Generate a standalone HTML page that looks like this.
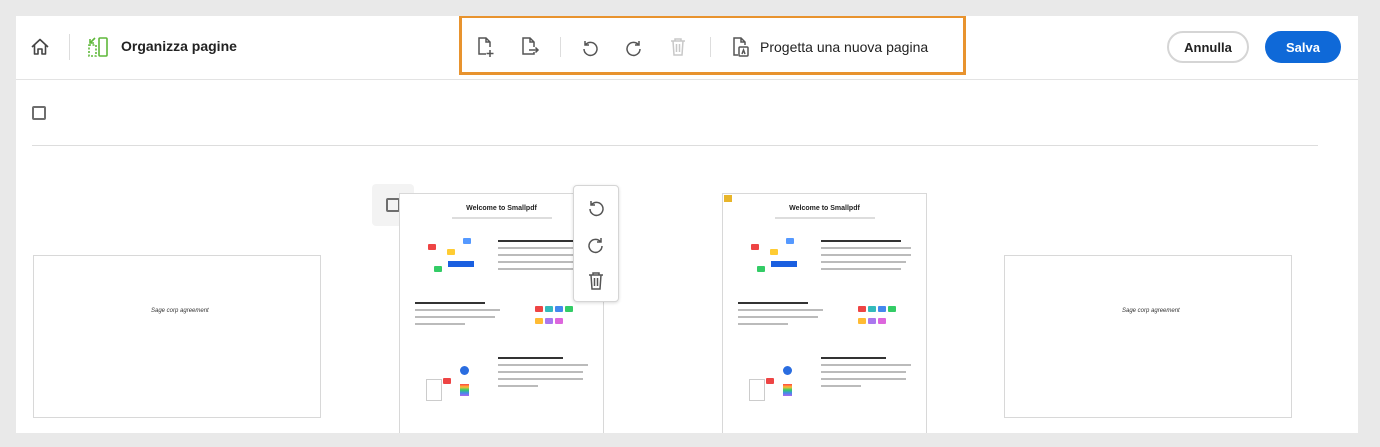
<!DOCTYPE html>
<html><head><meta charset="utf-8"><style>
*{box-sizing:border-box;margin:0;padding:0}
body{width:1380px;height:447px;background:#e9e9e9;font-family:"Liberation Sans",sans-serif;position:relative;overflow:hidden}
.panel{position:absolute;left:16px;top:16px;width:1342px;height:417px;background:#fff;overflow:hidden}
.hdr{position:absolute;left:0;top:0;width:1342px;height:64px;border-bottom:1px solid #e3e3e3}
.abs{position:absolute}
.title{left:105px;top:22px;font-size:14px;font-weight:bold;color:#222}
.tb{position:absolute;left:443px;top:-1px;width:507px;height:60px;border:3px solid #e8932e;background:#fff}
.btn{position:absolute;top:15px;height:32px;border-radius:16px;font-size:13px;font-weight:bold;display:flex;align-items:center;justify-content:center}
.cb{position:absolute;width:14px;height:14px;border:2px solid #6e6e6e;border-radius:2px}
.page{position:absolute;background:#fff;border:1px solid #d8d8d8;overflow:hidden}
.t{position:absolute;height:2px;background:#bbb}
.tb2{position:absolute;height:3px;background:#333}
.sq{position:absolute;width:8px;height:6px;border-radius:1px}
.wt{position:absolute;left:0;width:100%;text-align:center;top:11px;font-size:7px;font-weight:bold;color:#222}
</style></head><body>
<div class="panel">
 <div class="hdr">
  <svg class="abs" style="left:14px;top:21px" width="20" height="20" viewBox="0 0 20 20" fill="none" stroke="#444" stroke-width="1.6" stroke-linejoin="round"><path d="M2 10 L10 2.5 L18 10 M4.5 8 V17 H8 V12 H12 V17 H15.5 V8"/></svg>
  <div class="abs" style="left:53px;top:18px;width:1px;height:26px;background:#ddd"></div>
  <svg class="abs" style="left:70px;top:19px" width="24" height="24" viewBox="0 0 24 24" fill="none" stroke="#5fb83a" stroke-width="1.6"><rect x="13" y="3" width="8" height="18" rx="1"/><path d="M3 10 H10 V21 H3 Z" stroke-dasharray="2 1.5"/><path d="M9 3 L4 8 M4 4 V8 H8"/></svg>
  <div class="abs title">Organizza pagine</div>
  <div class="tb">
   <svg class="abs" style="left:13px;top:17px" width="22" height="24" viewBox="0 0 22 24" fill="none" stroke="#555" stroke-width="1.5"><path d="M11 19 H4 V3 H11 L15 7 V12 M11 3 V7 H15 M15 15 V22 M11.5 18.5 H18.5"/></svg>
   <svg class="abs" style="left:57px;top:17px" width="22" height="24" viewBox="0 0 22 24" fill="none" stroke="#555" stroke-width="1.5"><path d="M15 12 V7 L11 3 H4 V19 H15 V17 M11 3 V7 H15 M10 15 H19 M16.5 12.5 L19 15 L16.5 17.5"/></svg>
   <div class="abs" style="left:98px;top:19px;width:1px;height:20px;background:#ddd"></div>
   <svg class="abs" style="left:118px;top:19px" width="20" height="20" viewBox="0 0 20 20" fill="none" stroke="#555" stroke-width="1.5"><path d="M5 4 V8 H9 M5.3 8 A6.5 6.5 0 1 1 4 12"/></svg>
   <svg class="abs" style="left:162px;top:19px" width="20" height="20" viewBox="0 0 20 20" fill="none" stroke="#555" stroke-width="1.5"><path d="M15 4 V8 H11 M14.7 8 A6.5 6.5 0 1 0 16 12"/></svg>
   <svg class="abs" style="left:206px;top:18px" width="20" height="22" viewBox="0 0 20 22" fill="none" stroke="#c8c8c8" stroke-width="1.5"><path d="M3 5 H17 M7 5 V3 H13 V5 M5 5 L6 19 H14 L15 5 M8.5 8 V16 M11.5 8 V16"/></svg>
   <div class="abs" style="left:248px;top:19px;width:1px;height:20px;background:#ddd"></div>
   <svg class="abs" style="left:268px;top:17px" width="22" height="24" viewBox="0 0 22 24" fill="none" stroke="#555" stroke-width="1.5"><path d="M8 20 H4 V3 H11 L15 7 V10 M11 3 V7 H15"/><rect x="9" y="12" width="9" height="9" rx="1"/><path d="M12 19 L13.5 15 L15 19"/></svg>
   <div class="abs" style="left:298px;top:21px;font-size:14px;color:#222">Progetta una nuova pagina</div>
  </div>
  <div class="btn" style="left:1151px;width:82px;border:2px solid #d5d5d5;color:#222">Annulla</div>
  <div class="btn" style="left:1249px;width:76px;background:#0f69d8;color:#fff">Salva</div>
 </div>
 <div class="cb" style="left:16px;top:90px"></div>
 <div class="abs" style="left:16px;top:129px;width:1286px;height:1px;background:#ddd"></div>

 <div class="page" style="left:17px;top:239px;width:288px;height:163px"><div class="abs" style="left:117px;top:52px;font-size:6px;font-style:italic;color:#333">Sage corp agreement</div></div>
 <div class="page" style="left:988px;top:239px;width:288px;height:163px"><div class="abs" style="left:117px;top:52px;font-size:6px;font-style:italic;color:#333">Sage corp agreement</div></div>

 <div class="abs" style="left:356px;top:168px;width:42px;height:42px;background:#f3f3f3;border-radius:4px"></div>
 <div class="cb" style="left:370px;top:182px"></div>

 <!-- page 2 -->
 <div class="page" style="left:383px;top:177px;width:205px;height:260px">
  <div class="wt">Welcome to Smallpdf</div>
  <div class="t" style="left:52px;top:23px;width:100px;background:#ddd"></div>
  <div class="sq" style="left:28px;top:50px;background:#e44"></div><div class="sq" style="left:47px;top:55px;background:#fc3"></div><div class="sq" style="left:63px;top:44px;background:#59f"></div><div class="sq" style="left:34px;top:72px;background:#3c6"></div>
  <div class="abs" style="left:48px;top:67px;width:26px;height:6px;background:#1a5fe0"></div>
  <div class="tb2" style="left:98px;top:46px;width:80px;height:2px"></div>
  <div class="t" style="left:98px;top:53px;width:90px"></div><div class="t" style="left:98px;top:60px;width:90px"></div><div class="t" style="left:98px;top:67px;width:85px"></div><div class="t" style="left:98px;top:74px;width:80px"></div>
  <div class="tb2" style="left:15px;top:108px;width:70px;height:2px"></div>
  <div class="t" style="left:15px;top:115px;width:85px"></div><div class="t" style="left:15px;top:122px;width:80px"></div><div class="t" style="left:15px;top:129px;width:50px"></div>
  <div class="sq" style="left:135px;top:112px;background:#e44"></div><div class="sq" style="left:145px;top:112px;background:#3bb"></div><div class="sq" style="left:155px;top:112px;background:#48e"></div><div class="sq" style="left:165px;top:112px;background:#3c6"></div>
  <div class="sq" style="left:135px;top:124px;background:#fb3"></div><div class="sq" style="left:145px;top:124px;background:#a7e"></div><div class="sq" style="left:155px;top:124px;background:#d6d"></div>
  <div class="tb2" style="left:98px;top:163px;width:65px;height:2px"></div>
  <div class="t" style="left:98px;top:170px;width:90px"></div><div class="t" style="left:98px;top:177px;width:85px"></div><div class="t" style="left:98px;top:184px;width:85px"></div><div class="t" style="left:98px;top:191px;width:40px"></div>
  <div class="abs" style="left:26px;top:185px;width:16px;height:22px;border:1px solid #ccc"></div>
  <div class="sq" style="left:43px;top:184px;background:#e44"></div>
  <div class="abs" style="left:60px;top:172px;width:9px;height:9px;border-radius:50%;background:#2a6de0"></div>
  <div class="abs" style="left:60px;top:190px;width:9px;height:12px;background:linear-gradient(#f44,#fb3,#3c6,#48e,#a6e)"></div>
  <div class="tb2" style="left:15px;top:244px;width:50px;height:2px"></div>
 </div>
 <!-- page 3 -->
 <div class="page" style="left:706px;top:177px;width:205px;height:260px">
  <div class="abs" style="left:1px;top:1px;width:8px;height:7px;background:#e8b52a"></div>
  <div class="wt">Welcome to Smallpdf</div>
  <div class="t" style="left:52px;top:23px;width:100px;background:#ddd"></div>
  <div class="sq" style="left:28px;top:50px;background:#e44"></div><div class="sq" style="left:47px;top:55px;background:#fc3"></div><div class="sq" style="left:63px;top:44px;background:#59f"></div><div class="sq" style="left:34px;top:72px;background:#3c6"></div>
  <div class="abs" style="left:48px;top:67px;width:26px;height:6px;background:#1a5fe0"></div>
  <div class="tb2" style="left:98px;top:46px;width:80px;height:2px"></div>
  <div class="t" style="left:98px;top:53px;width:90px"></div><div class="t" style="left:98px;top:60px;width:90px"></div><div class="t" style="left:98px;top:67px;width:85px"></div><div class="t" style="left:98px;top:74px;width:80px"></div>
  <div class="tb2" style="left:15px;top:108px;width:70px;height:2px"></div>
  <div class="t" style="left:15px;top:115px;width:85px"></div><div class="t" style="left:15px;top:122px;width:80px"></div><div class="t" style="left:15px;top:129px;width:50px"></div>
  <div class="sq" style="left:135px;top:112px;background:#e44"></div><div class="sq" style="left:145px;top:112px;background:#3bb"></div><div class="sq" style="left:155px;top:112px;background:#48e"></div><div class="sq" style="left:165px;top:112px;background:#3c6"></div>
  <div class="sq" style="left:135px;top:124px;background:#fb3"></div><div class="sq" style="left:145px;top:124px;background:#a7e"></div><div class="sq" style="left:155px;top:124px;background:#d6d"></div>
  <div class="tb2" style="left:98px;top:163px;width:65px;height:2px"></div>
  <div class="t" style="left:98px;top:170px;width:90px"></div><div class="t" style="left:98px;top:177px;width:85px"></div><div class="t" style="left:98px;top:184px;width:85px"></div><div class="t" style="left:98px;top:191px;width:40px"></div>
  <div class="abs" style="left:26px;top:185px;width:16px;height:22px;border:1px solid #ccc"></div>
  <div class="sq" style="left:43px;top:184px;background:#e44"></div>
  <div class="abs" style="left:60px;top:172px;width:9px;height:9px;border-radius:50%;background:#2a6de0"></div>
  <div class="abs" style="left:60px;top:190px;width:9px;height:12px;background:linear-gradient(#f44,#fb3,#3c6,#48e,#a6e)"></div>
  <div class="tb2" style="left:15px;top:244px;width:50px;height:2px"></div>
 </div>

 <!-- floating menu -->
 <div class="abs" style="left:557px;top:169px;width:46px;height:117px;background:#fff;border:1px solid #d5d5d5;border-radius:4px;box-shadow:0 1px 3px rgba(0,0,0,.15)">
  <svg class="abs" style="left:12px;top:11px" width="20" height="20" viewBox="0 0 20 20" fill="none" stroke="#555" stroke-width="1.5"><path d="M5 4 V8 H9 M5.3 8 A6.5 6.5 0 1 1 4 12"/></svg>
  <svg class="abs" style="left:12px;top:48px" width="20" height="20" viewBox="0 0 20 20" fill="none" stroke="#555" stroke-width="1.5"><path d="M15 4 V8 H11 M14.7 8 A6.5 6.5 0 1 0 16 12"/></svg>
  <svg class="abs" style="left:12px;top:84px" width="20" height="22" viewBox="0 0 20 22" fill="none" stroke="#555" stroke-width="1.5"><path d="M3 5 H17 M7 5 V3 H13 V5 M5 5 L6 19 H14 L15 5 M8.5 8 V16 M11.5 8 V16"/></svg>
 </div>
</div>
</body></html>
